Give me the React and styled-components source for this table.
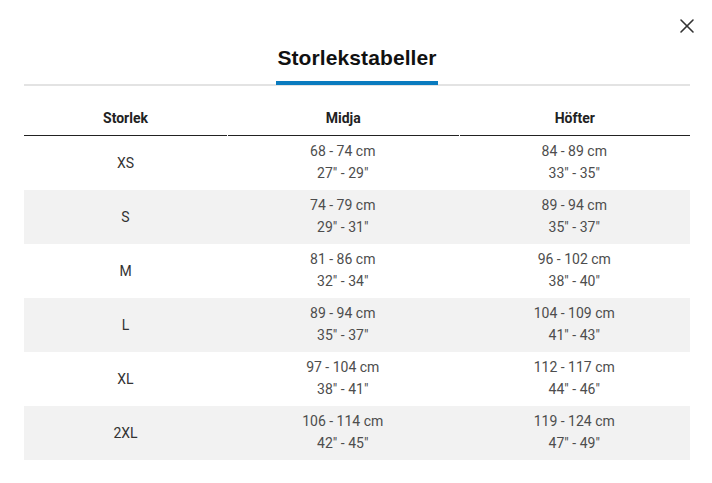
import React from 'react';
import styled, { createGlobalStyle } from 'styled-components';

const GlobalStyle = createGlobalStyle`
  html, body {
    margin: 0;
    background: #fff;
  }
  body {
    font-family: Roboto, "Liberation Sans", Arial, sans-serif;
    color: #333;
  }
`;

const ROWS = [
  { size: 'XS', waist: ['68 - 74 cm', '27" - 29"'], hips: ['84 - 89 cm', '33" - 35"'] },
  { size: 'S', waist: ['74 - 79 cm', '29" - 31"'], hips: ['89 - 94 cm', '35" - 37"'] },
  { size: 'M', waist: ['81 - 86 cm', '32" - 34"'], hips: ['96 - 102 cm', '38" - 40"'] },
  { size: 'L', waist: ['89 - 94 cm', '35" - 37"'], hips: ['104 - 109 cm', '41" - 43"'] },
  { size: 'XL', waist: ['97 - 104 cm', '38" - 41"'], hips: ['112 - 117 cm', '44" - 46"'] },
  { size: '2XL', waist: ['106 - 114 cm', '42" - 45"'], hips: ['119 - 124 cm', '47" - 49"'] },
];

const Modal = styled.div`
  width: 712px;
  height: 483px;
  box-sizing: border-box;
  padding: 0 22px 0 24px;
`;

const CloseRow = styled.div`
  display: flex;
  justify-content: flex-end;
  padding-top: 18px;
  margin-right: -5px;
`;

const CloseButton = styled.button`
  width: 16px;
  height: 16px;
  padding: 0;
  border: 0;
  background: none;
  color: #333;
  display: flex;
  align-items: center;
  justify-content: center;
  cursor: pointer;
`;

const TitleWrap = styled.div`
  text-align: center;
  border-bottom: 2px solid #e3e3e3;
  margin-top: 12px;
`;

const Title = styled.h2`
  display: inline-block;
  margin: 0 0 -1px;
  font-family: "Liberation Sans", Arial, sans-serif;
  font-weight: bold;
  font-size: 21px;
  letter-spacing: 0.1px;
  line-height: 24px;
  color: #111;
  padding: 0 1px 11px;
  border-bottom: 4px solid #0a7bbf;
`;

const Grid = styled.div`
  display: grid;
  grid-template-columns: 203px 1fr 1fr;
  column-gap: ${p => (p.$head ? '1px' : '0')};
  background: ${p => (p.$shaded ? '#f2f2f2' : 'transparent')};
`;

const HeadCell = styled.div`
  text-align: center;
  font-weight: 700;
  font-size: 14px;
  line-height: 16px;
  color: #222;
  padding: 24px 0 9px;
  border-bottom: 1px solid #222;
`;

const SizeCell = styled.div`
  display: flex;
  align-items: center;
  justify-content: center;
  font-size: 14px;
  color: #333;
  height: 54px;
`;

const MeasureCell = styled.div`
  text-align: center;
  font-size: 14px;
  line-height: 22px;
  color: #4d4d4d;
  padding: 4px 0 6px;
  height: 54px;
  box-sizing: border-box;
`;

const CloseIcon = () => (
  <svg width="16" height="16" viewBox="0 0 16 16" fill="none" stroke="currentColor" strokeWidth="1.6" strokeLinecap="round">
    <line x1="2" y1="2" x2="14" y2="14" />
    <line x1="14" y1="2" x2="2" y2="14" />
  </svg>
);

function Measure({ lines }) {
  return (
    <MeasureCell>
      {lines.map(l => <div key={l}>{l}</div>)}
    </MeasureCell>
  );
}

export default function App() {
  return (
    <>
      <GlobalStyle />
      <Modal>
        <CloseRow>
          <CloseButton aria-label="Stäng"><CloseIcon /></CloseButton>
        </CloseRow>
        <TitleWrap>
          <Title>Storlekstabeller</Title>
        </TitleWrap>
        <Grid $head>
          <HeadCell>Storlek</HeadCell>
          <HeadCell>Midja</HeadCell>
          <HeadCell>Höfter</HeadCell>
        </Grid>
        {ROWS.map((r, i) => (
          <Grid key={r.size} $shaded={i % 2 === 1}>
            <SizeCell>{r.size}</SizeCell>
            <Measure lines={r.waist} />
            <Measure lines={r.hips} />
          </Grid>
        ))}
      </Modal>
    </>
  );
}
